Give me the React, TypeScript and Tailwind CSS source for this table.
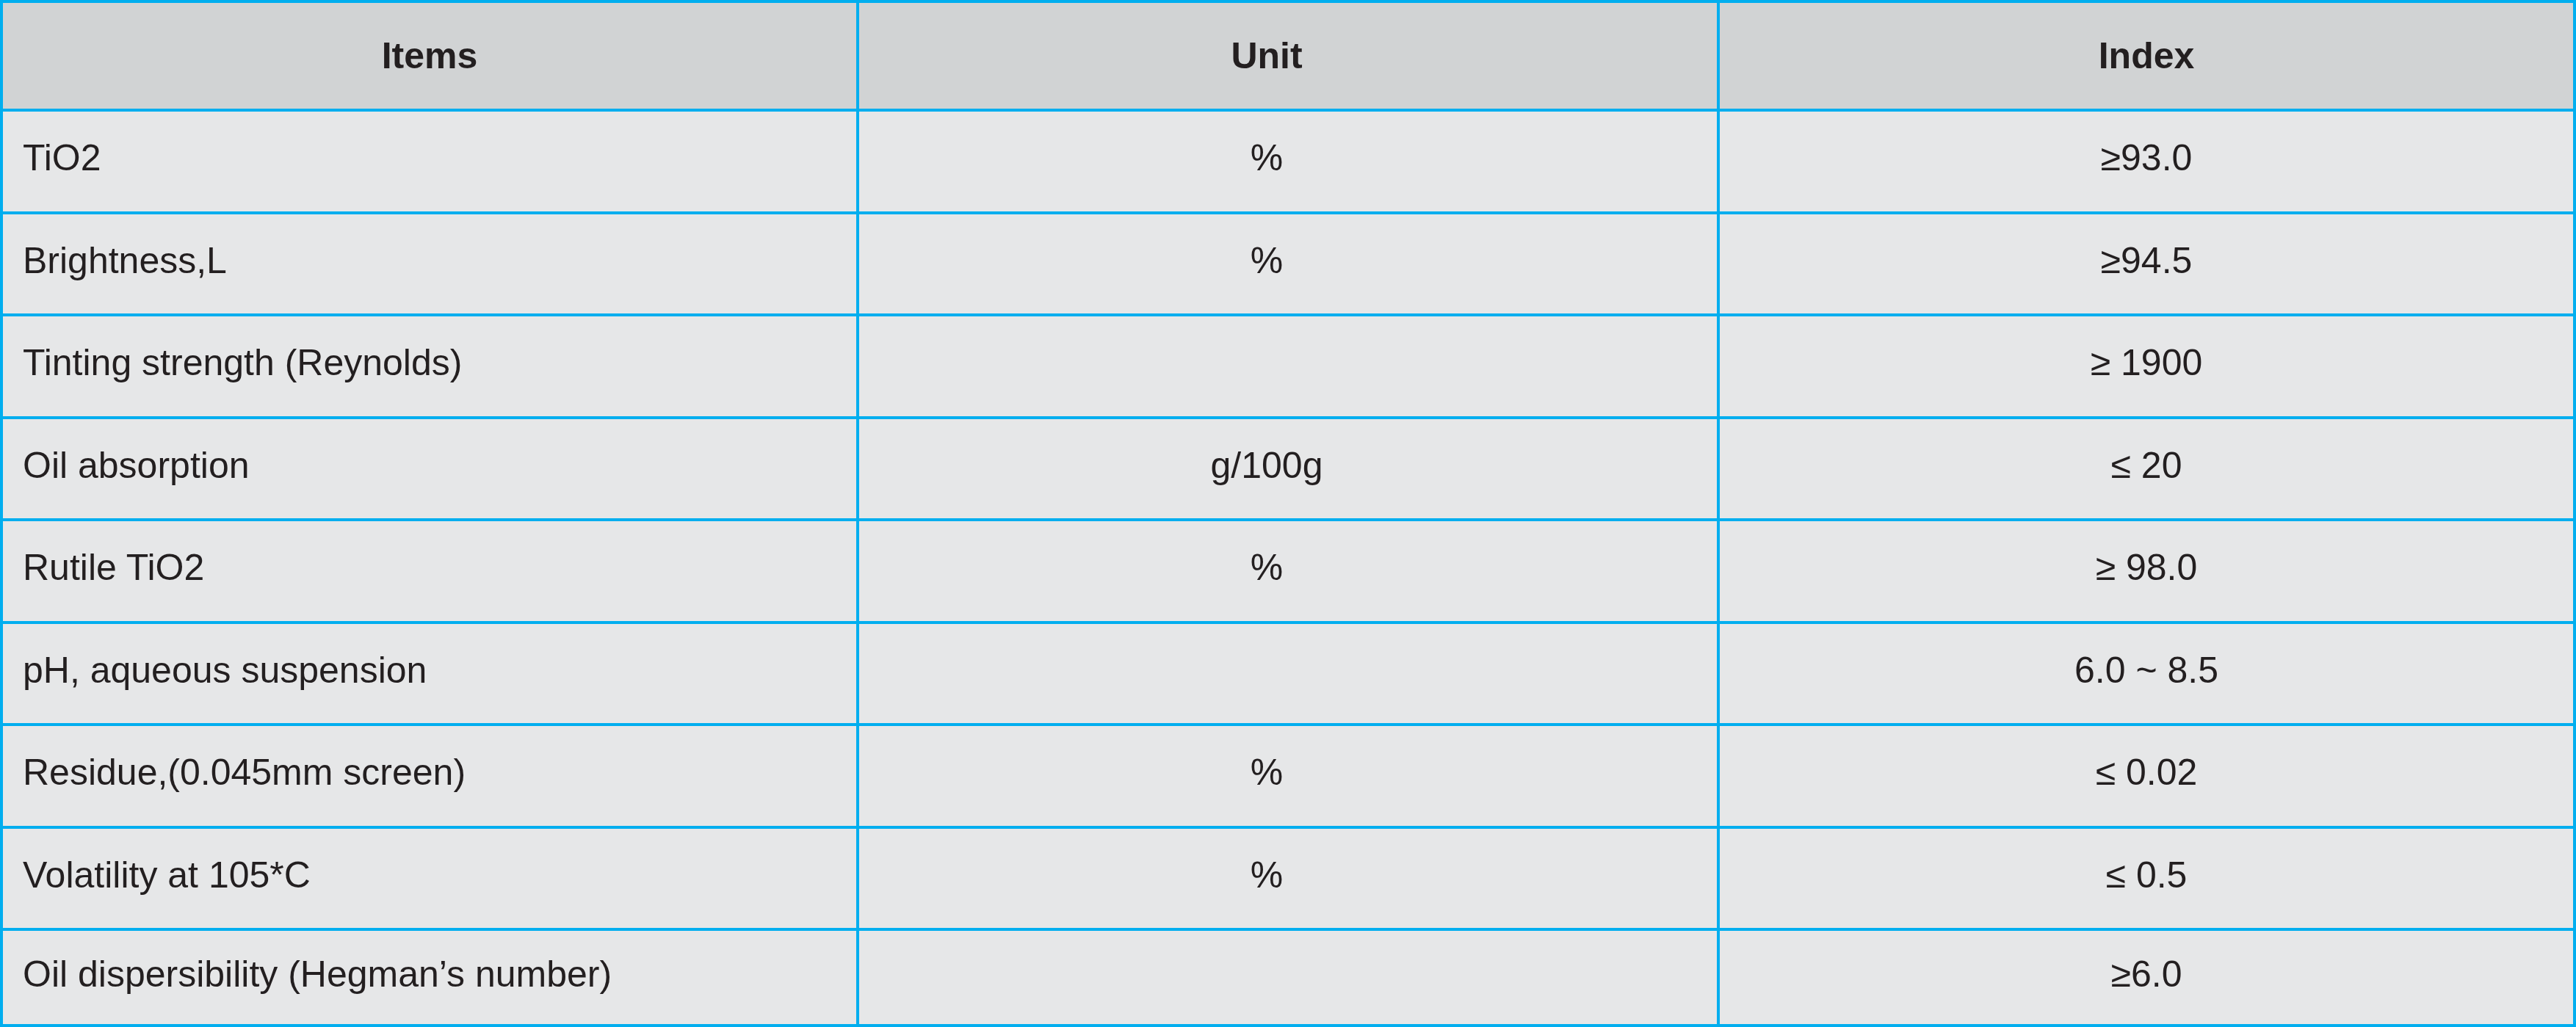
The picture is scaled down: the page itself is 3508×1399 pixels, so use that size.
import React, { ReactElement } from 'react';

interface SpecRow {
  item: string,
  unit: string,
  index: string
}

const ROWS: SpecRow[] = [
  { item: 'TiO2', unit: '%', index: '≥93.0' },
  { item: 'Brightness,L', unit: '%', index: '≥94.5' },
  { item: 'Tinting strength (Reynolds)', unit: '', index: '≥ 1900' },
  { item: 'Oil absorption', unit: 'g/100g', index: '≤ 20' },
  { item: 'Rutile TiO2', unit: '%', index: '≥ 98.0' },
  { item: 'pH, aqueous suspension', unit: '', index: '6.0 ~ 8.5' },
  { item: 'Residue,(0.045mm screen)', unit: '%', index: '≤ 0.02' },
  { item: 'Volatility at 105*C', unit: '%', index: '≤ 0.5' },
  { item: 'Oil dispersibility (Hegman’s number)', unit: '', index: '≥6.0' },
];

const App = (): ReactElement => {
  return (
    <div className="w-[3508px] h-[1399px] bg-[#00aeef] p-[4px] grid grid-cols-[1162px_1168px_1162px] grid-rows-[144px_repeat(8,135.5px)_1fr] gap-[4px] text-[#231f20] font-['Liberation_Sans',Arial,sans-serif]">
      {/* header */}
      <div className="bg-[#d1d3d4] flex items-center justify-center text-[50px] font-bold">Items</div>
      <div className="bg-[#d1d3d4] flex items-center justify-center pr-[58px] text-[50px] font-bold">Unit</div>
      <div className="bg-[#d1d3d4] flex items-center justify-center text-[50px] font-bold">Index</div>

      {ROWS.map((row, i) => (
        <React.Fragment key={i.toString()}>
          <div className="bg-[#e6e7e8] flex items-center pl-[27px] pb-[8px] text-[50px] whitespace-nowrap">{row.item}</div>
          <div className="bg-[#e6e7e8] flex items-center justify-center pr-[58px] pb-[8px] text-[50px]">{row.unit}</div>
          <div className="bg-[#e6e7e8] flex items-center justify-center pb-[8px] text-[50px]">{row.index}</div>
        </React.Fragment>
      ))}
    </div>
  )
}

export default App;
